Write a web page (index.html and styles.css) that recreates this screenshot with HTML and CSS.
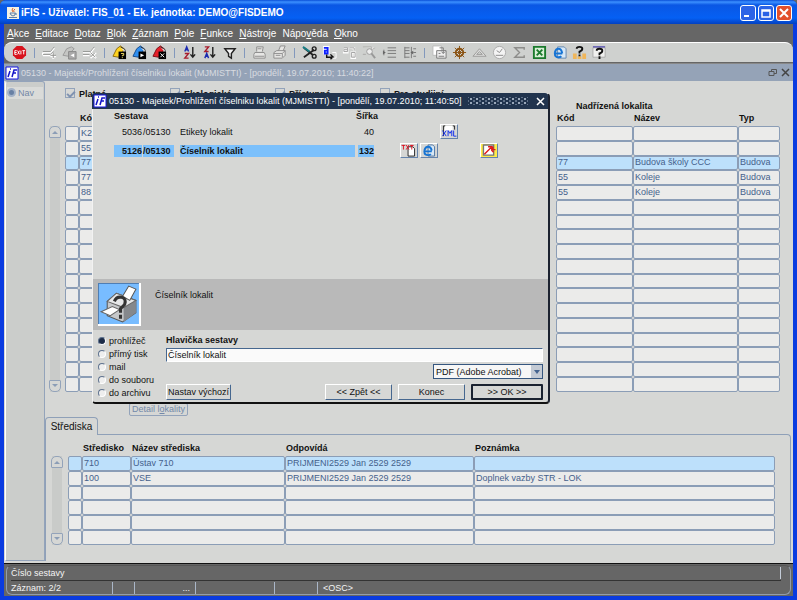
FILE: index.html
```html
<!DOCTYPE html>
<html lang="cs">
<head>
    <meta charset="UTF-8">
    <meta name="viewport" content="width=device-width, initial-scale=1.0">
    <title>iFIS</title>
    <link rel="stylesheet" href="styles.css">
</head>
<body>

<div class="window">
    <header class="titlebar">
        <svg class="java" width="12" height="12" viewBox="0 0 12 12"><rect width="12" height="12" fill="#f4f1e4"/><path d="M6 1q-2 2 0 4M8 2q-2 1-1 3" stroke="#d8642c" fill="none"/><path d="M3 6h5v2q-2 2-4 0zM8 6q2 0 1 2M2 10.500h8" stroke="#5b7fa8" fill="none"/></svg>
        <h1>iFIS - Uživatel: FIS_01 - Ek. jednotka: DEMO@FISDEMO</h1>
        <div class="window-buttons">
            <button aria-label="Minimalizovat"><svg width="14" height="14"><path d="M3 10h5" stroke="#fff" stroke-width="2"/></svg></button>
            <button aria-label="Maximalizovat"><svg width="14" height="14"><path d="M3 4h8v7H3zM3 5h8" stroke="#fff" fill="none" stroke-width="1.500"/></svg></button>
            <button class="close" aria-label="Zavřít"><svg width="14" height="14"><path d="M3 3l8 8M11 3l-8 8" stroke="#fff" stroke-width="2"/></svg></button>
        </div>
    </header>

    <nav class="menu">
        <a href="#"><u>A</u>kce</a>
        <a href="#"><u>E</u>ditace</a>
        <a href="#"><u>D</u>otaz</a>
        <a href="#"><u>B</u>lok</a>
        <a href="#"><u>Z</u>áznam</a>
        <a href="#"><u>P</u>ole</a>
        <a href="#"><u>F</u>unkce</a>
        <a href="#"><u>N</u>ástroje</a>
        <a href="#">Nápo<u>v</u>ěda</a>
        <a href="#"><u>O</u>kno</a>
    </nav>

    <div class="toolbar">
        <button aria-label="Konec"><svg viewBox="0 0 16 16"><path d="M5 1h6l4 4v6l-4 4H5l-4-4V5z" fill="#d8121c"/><path d="M5 6H3v4h2M3 8h2M6 6l2 4M8 6l-2 4M9.500 6v4M11 6h3M12.500 6v4" stroke="#fff" fill="none"/></svg></button>
        <i></i>
        <button aria-label="Nový záznam"><svg viewBox="0 0 16 16"><path d="M1 8h8l4-5M1 11h8l3-3M1 8v3M12 9v6M9 12h6" stroke="#fff" fill="none" stroke-width="2"/><path d="M1 7h8l4-5M1 10h8l3-3M12 8v6M9 11h6" stroke="#8f908e" fill="none"/></svg></button>
        <button aria-label="Kopie záznamu"><svg viewBox="0 0 16 16"><path d="M1 11l4-7 5-2 3 2-4 4-2 4z" fill="#c4c5c3" stroke="#999"/><path d="M7 7h8v8H7z" fill="#aaa" stroke="#888"/><path d="M13 9v4l-4-2z" fill="#fff"/></svg></button>
        <button aria-label="Smazat záznam"><svg viewBox="0 0 16 16"><path d="M1 8h8l4-5M1 11h7M9 8l6 6M15 8l-6 6" stroke="#fff" fill="none" stroke-width="2"/><path d="M1 7h8l4-5M1 10h7M9 8l5 5M14 8l-5 5" stroke="#8f908e" fill="none"/></svg></button>
        <i></i>
        <button aria-label="Zadat dotaz"><svg viewBox="0 0 16 16"><path d="M1 12l4-8 4-3 4 3-2 4-4 5z" fill="#ffd21e" stroke="#8a6a10"/><path d="M9 2l5 3v3" stroke="#333" fill="#fff"/><path d="M7 7h8v8H7z"/><path d="M9.500 9h3v2h-1.500v1M11 13v1" stroke="#ffe86a" fill="none"/></svg></button>
        <button aria-label="Provést dotaz"><svg viewBox="0 0 16 16"><path d="M1 12l4-8 4-3 4 3-2 4-4 5z" fill="#2f8ff0" stroke="#174b8b"/><path d="M9 2l5 3v3" stroke="#333" fill="#fff"/><path d="M7 7h8v8H7z"/><path d="M9 9v4l4-2z" fill="#fff"/></svg></button>
        <button aria-label="Zrušit dotaz"><svg viewBox="0 0 16 16"><path d="M1 12l4-8 4-3 4 3-2 4-4 5z" fill="#e6202a" stroke="#7b1016"/><path d="M9 2l5 3v3" stroke="#333" fill="#fff"/><path d="M7 7h8v8H7z"/><path d="M9 9l4 4M13 9l-4 4" stroke="#fff"/></svg></button>
        <i></i>
        <button aria-label="Třídit vzestupně"><svg viewBox="0 0 16 16"><path d="M3 7l2-5 2 5M4 5h2" stroke="#1c2bb0" fill="none" stroke-width="1.500"/><path d="M3 9h4l-4 5h4" stroke="#a81c2c" fill="none" stroke-width="1.500"/><path d="M11.500 2v11M9 10l2.500 3L14 10" stroke="#222" fill="none" stroke-width="1.500"/></svg></button>
        <button aria-label="Třídit sestupně"><svg viewBox="0 0 16 16"><path d="M3 2h4L3 7h4" stroke="#a81c2c" fill="none" stroke-width="1.500"/><path d="M3 14l2-5 2 5M4 12h2" stroke="#1c2bb0" fill="none" stroke-width="1.500"/><path d="M11.500 2v11M9 10l2.500 3L14 10" stroke="#222" fill="none" stroke-width="1.500"/></svg></button>
        <button aria-label="Filtr"><svg viewBox="0 0 16 16"><path d="M3 4h11L10 9v5l-3-2V9z" fill="#f4f4f4" stroke="#222" stroke-width="1.500"/></svg></button>
        <i></i>
        <button aria-label="Tisk"><svg viewBox="0 0 16 16"><path d="M5 7V2h7l-1 5M3 8h10l1 2v4H2v-4z" fill="#e6e6e4" stroke="#8c8c8c"/><path d="M3 12h10M6 4h4" stroke="#8c8c8c"/></svg></button>
        <button aria-label="Tisk sestavy"><svg viewBox="0 0 16 16"><path d="M7 6l2-5h5l-2 5M2 8l3-2h9v5l-3 3H2z" fill="#e6e6e4" stroke="#8c8c8c"/><path d="M2 9h9v4M11 9l3-3M4 11h5" stroke="#8c8c8c" fill="none"/></svg></button>
        <i></i>
        <button aria-label="Vyjmout"><svg viewBox="0 0 16 16"><path d="M2 3l10 8M2 13L13 5" stroke="#222" stroke-width="2"/><path d="M1 2l7 5" stroke="#1a7f86" stroke-width="2"/><circle cx="13" cy="4" r="2" fill="none" stroke="#222" stroke-width="1.500"/><circle cx="13" cy="12" r="2" fill="none" stroke="#222" stroke-width="1.500"/></svg></button>
        <button aria-label="Kopírovat"><svg viewBox="0 0 16 16"><path d="M1 1h7v9H1z" fill="#fff"/><path d="M2 3h4v6H3V6h3" stroke="#0b1fff" fill="none" stroke-width="2"/><path d="M5 10v3h7M9 10l3 3-3 2" stroke="#111" fill="none" stroke-width="1.500"/><path d="M11 8h4v6h-4" stroke="#fff" fill="none"/></svg></button>
        <button aria-label="Vložit"><svg viewBox="0 0 16 16"><path d="M2 4h4v4H2V6h4M8 3h5v3M10 8h4v6h-4z" stroke="#fff" fill="#e4e4e2" stroke-width="2"/><path d="M2 3h4v4H2V5h4M8 3h5v3M10 8h4v5h-4z" stroke="#a0a0a0" fill="none"/></svg></button>
        <button aria-label="Editor"><svg viewBox="0 0 16 16"><path d="M1 2h9v3l4-2M4 10H1z" fill="#fff" stroke="#b0b0ae"/><circle cx="8" cy="7" r="3" fill="#eee" stroke="#999"/><path d="M10 9l4 5" stroke="#999" stroke-width="2"/></svg></button>
        <button aria-label="Seznam"><svg viewBox="0 0 16 16"><path d="M6 3h9M6 6h9M6 9h9M6 13h9M2 5v6" stroke="#777" fill="none"/><path d="M1 6l3 2-3 2z" fill="#666"/></svg></button>
        <button aria-label="Strom"><svg viewBox="0 0 16 16"><path d="M3 2v12M3 3h5M3 6h5M3 9h5M3 13h5M10 2v12M12 4h3M12 8h3M12 12h3" stroke="#777" fill="none"/><path d="M12 6v4l-3-2z" fill="#666"/></svg></button>
        <i></i>
        <button aria-label="Přenos"><svg viewBox="0 0 16 16"><path d="M1 1h9v10H1z" fill="#fff" stroke="#bbb"/><path d="M5 6h10v8H5z" fill="#eee" stroke="#777"/><path d="M8 3h4v6M10 7l2 2 2-2M7 9h2M7 12h6" stroke="#777" fill="none"/></svg></button>
        <button aria-label="Nastavení"><svg viewBox="0 0 16 16"><circle cx="8" cy="8" r="4" fill="none" stroke="#8a5212" stroke-width="2"/><path d="M8 1v14M1 8h14M3 3l10 10M13 3L3 13" stroke="#8a5212"/></svg></button>
        <button aria-label="Měřítko"><svg viewBox="0 0 16 16"><path d="M1 12L8 4l7 8zM5 10l3-3 3 3z" fill="#ddd" stroke="#9a9a98" fill-rule="evenodd"/></svg></button>
        <button aria-label="Hodiny"><svg viewBox="0 0 16 16"><circle cx="8" cy="8" r="6.500" fill="#f4f4f4" stroke="#aaa"/><path d="M5 6l3 2 3-4M4 11h8" stroke="#888" fill="none"/></svg></button>
        <button aria-label="Součet"><svg viewBox="0 0 16 16"><path d="M13 5V3H3l5 5-5 5h10v-2" fill="none" stroke="#8d8d8b" stroke-width="1.500"/></svg></button>
        <button aria-label="Excel"><svg viewBox="0 0 16 16"><path d="M2 2h12v12H2z" fill="#d9efd6" stroke="#1a7a2c" stroke-width="2"/><path d="M5 5l6 6M11 5l-6 6" stroke="#1a7a2c" stroke-width="2"/></svg></button>
        <button aria-label="Prohlížeč"><svg viewBox="0 0 16 16"><path d="M6 2h7l2 2v10H6z" fill="#d8e8f6" stroke="#6288b0"/><path d="M11 9H3q0 4 4 4 2 0 3-1M3 8q1-4 4-4t4 5" fill="none" stroke="#1774d4" stroke-width="2"/></svg></button>
        <button aria-label="Nápověda organizace"><svg viewBox="0 0 16 16"><path d="M1 9h4v6H1zM6 12h4v3H6zM11 9h4v6h-4z" fill="#f0b65a"/><path d="M5 4q0-2 3-2t3 2q0 2-3 3v2M8 10v2" fill="none" stroke="#111" stroke-width="2"/></svg></button>
        <button aria-label="Nápověda"><svg viewBox="0 0 16 16"><path d="M1 3h13v10H1z" fill="#f0f0ee" stroke="#aaa"/><path d="M1 2h13" stroke="#2a1fa8"/><path d="M5 6q0-2 3-2t3 2q0 2-3 3v2M8 12v3" fill="none" stroke="#111" stroke-width="2"/></svg></button>
    </div>

    <div class="form-title">
        <svg class="logo" viewBox="0 0 14 14"><path d="M1 1h12v12H1z" fill="#fff" stroke="#1414e0"/><path d="M5 5l-2 6M5 3h1M7 11l2-7h3M8 7h3" stroke="#1414c8" fill="none" stroke-width="1.500"/></svg>
        <h2>05130 - Majetek/Prohlížení číselniku lokalit (MJMISTTI) - [pondělí, 19.07.2010; 11:40:22]</h2>
        <div class="form-buttons">
            <button aria-label="Obnovit"><svg width="9" height="9"><path d="M3.500 3V1.500h5v4H6M1 3.500h5v4H1z" stroke="#555" fill="none"/></svg></button>
            <button aria-label="Zavřít formulář"><svg width="9" height="9"><path d="M1 1l7 7M8 1L1 8" stroke="#444" stroke-width="1.500"/></svg></button>
        </div>
    </div>

    <main class="form">
        <aside class="side">
            <label><input type="radio" name="nav" checked>Nav</label>
        </aside>

        <div class="content">
            <div class="checks">
                <label><input type="checkbox" checked>Platné</label>
                <label><input type="checkbox" checked>Ekologické</label>
                <label><input type="checkbox" checked>Přístupné</label>
                <label><input type="checkbox">Pro studijní</label>
            </div>

            <div class="locations">
                <div class="scroll">
                    <button aria-label="Nahoru"><svg width="8" height="4"><path d="M1 4l3-3 3 3z"/></svg></button>
                    <button aria-label="Dolů"><svg width="8" height="4"><path d="M1 0h6L4 3z"/></svg></button>
                </div>
                <div class="block own">
                    <table class="grid" id="own" data-rows="18">
                        <colgroup><col class="mark"><col></colgroup>
                        <thead><tr><th></th><th>Kód</th></tr></thead>
                        <tbody></tbody>
                    </table>
                </div>
                <div class="block parent">
                    <h3>Nadřízená lokalita</h3>
                    <table class="grid" id="parent" data-rows="18">
                        <colgroup><col class="code"><col class="name"><col></colgroup>
                        <thead><tr><th>Kód</th><th>Název</th><th>Typ</th></tr></thead>
                        <tbody></tbody>
                    </table>
                </div>
            </div>

            <button class="detail">Detail l<u>o</u>kality</button>

            <button class="tab">Střediska</button>
            <section class="panel">
                <div class="scroll">
                    <button aria-label="Nahoru"><svg width="8" height="4"><path d="M1 4l3-3 3 3z"/></svg></button>
                    <button aria-label="Dolů"><svg width="8" height="4"><path d="M1 0h6L4 3z"/></svg></button>
                </div>
                <table class="grid" id="centres" data-rows="6">
                    <colgroup><col class="mark"><col class="centre"><col class="title"><col class="person"><col></colgroup>
                    <thead><tr><th></th><th>Středisko</th><th>Název střediska</th><th>Odpovídá</th><th>Poznámka</th></tr></thead>
                    <tbody></tbody>
                </table>
            </section>
        </div>
    </main>

    <footer class="status">
        <div class="hint"><span>Číslo sestavy</span></div>
        <div class="record">
            <span>Záznam: 2/2</span><span></span><span class="dots">...</span><span></span><span></span><span>&lt;OSC&gt;</span>
        </div>
    </footer>
</div>

<div class="dialog" role="dialog" aria-label="Sestavy">
    <div class="dialog-title">
        <svg class="logo" viewBox="0 0 14 14"><path d="M1 1h12v12H1z" fill="#fff" stroke="#1414e0"/><path d="M5 5l-2 6M5 3h1M7 11l2-7h3M8 7h3" stroke="#1414c8" fill="none" stroke-width="1.500"/></svg>
        <h2>05130 - Majetek/Prohlížení číselniku lokalit (MJMISTTI) - [pondělí, 19.07.2010; 11:40:50]</h2>
        <span class="grip"></span>
        <button aria-label="Zavřít dialog"><svg width="9" height="9"><path d="M1 1l7 7M8 1L1 8" stroke="#fff" stroke-width="1.500"/></svg></button>
    </div>

    <table class="reports">
        <colgroup><col class="number"><col class="module"><col class="report"><col class="width"><col></colgroup>
        <thead><tr><th colspan="3">Sestava</th><th>Šířka</th><th></th></tr></thead>
        <tbody>
            <tr>
                <td class="right"><span>5036</span></td><td><span>/05130</span></td><td><span>Etikety lokalit</span></td><td class="right"><span>40</span></td>
                <td><div class="outputs">
                    <button class="xml" aria-label="XML"><svg viewBox="0 0 16 14"><path d="M2 12V1h2M12 1h2v4" fill="none" stroke="#222"/><path d="M4 1h8v5H3z" fill="#fff"/><path d="M1 6l4 6M5 6l-4 6M7 12V6l2 3 2-3v6M13 6v6h3" stroke="#0b28f0" fill="none"/></svg></button>
                </div></td>
            </tr>
            <tr class="current">
                <td class="right"><span>5126</span></td><td><span>/05130</span></td><td><span>Číselník lokalit</span></td><td class="right"><span>132</span></td>
                <td><div class="outputs">
                    <button class="txt" aria-label="TXT"><svg viewBox="0 0 16 14"><path d="M7 3h5l2 2v8H7z" fill="#fff" stroke="#222"/><path d="M0 1.500h4M2 1v5M5 1l3 5M8 1L5 6M9 1.500h4M11 1v5" stroke="#e01020" fill="none"/></svg></button>
                    <button class="html" aria-label="HTML"><svg viewBox="0 0 16 14"><path d="M7 1h5l2 2v10H7z" fill="#d8e8f6" stroke="#4a70a0"/><path d="M11 8H3q0 4 4 4 2 0 3-1M3 7q1-4 4-4t4 4" fill="none" stroke="#1774d4" stroke-width="2"/></svg></button>
                    <button class="pdf" aria-label="PDF"><svg viewBox="0 0 16 14"><path d="M2 1h11v11H2z" fill="#fff" stroke="#777" stroke-width="1.500"/><path d="M3 11l7-7M7 3h4q2 0 1 3h3M11 3v4l2 2" fill="none" stroke="#e01818" stroke-width="1.500"/></svg></button>
                </div></td>
            </tr>
        </tbody>
    </table>

    <div class="summary">
        <svg viewBox="0 0 42 42">
            <path d="M0 0h42v42H0z" fill="#78bcff"/>
            <path d="M0 42V0h42" fill="none" stroke="#4f7eb4" stroke-width="2"/>
            <path d="M41 0v41H0" fill="none" stroke="#fff" stroke-width="2"/>
            <path d="M9 18l9-8 19 7v12l-13 9-15-6z" fill="#c6c8ca" stroke="#555"/>
            <path d="M25 24l12-7v12l-12 9z" fill="#85888c"/>
            <path d="M9 18l9-8 19 7-12 7z" fill="#e6e7e8" stroke="#666"/>
            <path d="M24 13l6-10 7 3-6 11z" fill="#fff" stroke="#555"/>
            <path d="M3 28l11-5 7 3-9 6z" fill="#fff" stroke="#666"/>
            <path d="M16 18q2-5 7-4t3 7l-4 4v4M22 31v4" fill="none" stroke="#333" stroke-width="3"/>
        </svg>
        <p>Číselník lokalit</p>
    </div>

    <form class="options">
        <fieldset class="targets">
            <label><input type="radio" name="target" checked>prohlížeč</label>
            <label><input type="radio" name="target">přímý tisk</label>
            <label><input type="radio" name="target">mail</label>
            <label><input type="radio" name="target">do souboru</label>
            <label><input type="radio" name="target">do archivu</label>
        </fieldset>
        <div class="fields">
            <label for="heading">Hlavička sestavy</label>
            <input type="text" id="heading" value="Číselník lokalit">
            <div class="select">
                <select id="format" aria-label="Formát">
                    <option>PDF (Adobe Acrobat)</option>
                </select>
            </div>
            <div class="actions">
                <button type="button" class="default">Nastav výchozí</button>
                <button type="button">&lt;&lt; Zpět &lt;&lt;</button>
                <button type="button">Konec</button>
                <button type="button" class="ok">&gt;&gt; OK &gt;&gt;</button>
            </div>
        </div>
    </form>
</div>

<script>
    const data = {
        own: [['', 'K2'], ['', '55'], ['', '77'], ['', '77'], ['', '88']],
        parent: [[], [], ['77', 'Budova školy CCC', 'Budova'], ['55', 'Koleje', 'Budova'], ['55', 'Koleje', 'Budova']],
        centres: [
            ['', '710', 'Ústav 710', 'PRIJMENI2529 Jan 2529 2529', ''],
            ['', '100', 'VSE', 'PRIJMENI2529 Jan 2529 2529', 'Doplnek vazby STR - LOK']
        ]
    };
    const selected = { own: 2, parent: 2, centres: 0 };

    // Fill every grid up to its number of visible rows
    document.querySelectorAll('.grid').forEach(function (table) {
        const body = table.querySelector('tbody');
        const columns = table.querySelectorAll('col').length;
        for (let i = 0; i < Number(table.dataset.rows); i++) {
            const row = body.insertRow();
            const values = data[table.id][i] || [];
            if (i === selected[table.id]) {
                row.className = 'selected';
            }
            for (let j = 0; j < columns; j++) {
                row.insertCell().textContent = values[j] || '';
            }
        }
    });
</script>

</body>
</html>
```
FILE: styles.css
```css
* {
    box-sizing: border-box;
}

body {
    margin: 0;
    font-family: 'Liberation Sans', Arial, sans-serif;
    font-size: 9px;
    line-height: 12px;
    color: #111;
    background-color: #666;
}

button, input, select {
    font: inherit;
    color: inherit;
    margin: 0;
    padding: 0;
}

button {
    border: none;
    background: none;
}

svg {
    display: block;
}

h1, h2, h3, p {
    margin: 0;
}

table {
    border-collapse: separate;
    border-spacing: 0;
    table-layout: fixed;
}

th {
    padding: 0;
    text-align: left;
    white-space: nowrap;
}

/* Main window */
.window {
    min-height: 100vh;
    display: flex;
    flex-direction: column;
    border: 4px solid #0a3be0;
    border-top: none;
    border-radius: 6px 6px 0 0;
    background-color: #666;
}

.titlebar {
    display: flex;
    align-items: center;
    height: 24px;
    margin: 0 -4px;
    padding: 2px 5px 0 7px;
    border-radius: 6px 6px 0 0;
    background: linear-gradient(#0a4fd8, #3c90ff 2px, #0a57e4 5px, #0560f4 18px, #0340c0);
    color: #fff;
}

.titlebar h1 {
    flex: 1;
    margin-left: 2px;
    font-size: 10px;
    font-weight: bold;
}

.window-buttons {
    display: flex;
    gap: 2px;
}

.window-buttons button {
    width: 16px;
    height: 16px;
    border: 1px solid #fff;
    border-radius: 3px;
    background-color: #2c63e6;
}

.window-buttons .close {
    background-color: #e2502c;
}

.menu {
    display: flex;
    gap: 6px;
    height: 18px;
    padding: 4px 3px 0;
    font-size: 10px;
}

.menu a {
    color: #fff;
    text-decoration: none;
}

.toolbar {
    display: flex;
    align-items: center;
    height: 20px;
    padding-left: 5px;
    border-top: 1px solid #fff;
    border-radius: 8px 8px 0 8px;
    background-color: #cfd1cf;
}

.toolbar button {
    width: 20px;
    padding: 0 3px;
}

.toolbar svg {
    width: 15px;
    height: 15px;
}

.toolbar i {
    width: 1px;
    height: 10px;
    margin: 0 4px 0 5px;
    background-color: #8298bc;
}

.form-title {
    display: flex;
    align-items: center;
    height: 18px;
    margin-top: 1px;
    padding: 0 3px 0 1px;
    border-top: 1px solid #888;
    background-color: #95a3b7;
    color: #d8dbe0;
}

.logo {
    width: 14px;
    height: 14px;
}

.form-title h2, .dialog-title h2 {
    margin-left: 2px;
    font-size: 9px;
    font-weight: normal;
    white-space: nowrap;
}

.form-buttons {
    display: flex;
    gap: 4px;
    margin-left: auto;
}

.form {
    flex: 1;
    display: flex;
    border-bottom: 1px solid #111;
    background-color: #d6d7d5;
}

.side {
    width: 40px;
    margin: 0 0 2px 1px;
    padding: 5px 1px;
    border: 1px solid #93a3ba;
    border-left-color: #fff;
    border-radius: 3px 3px 0 0;
    background-color: #cbcdcb;
    color: #7287a6;
}

.side label {
    display: flex;
    gap: 2px;
    background-color: #dadbd9;
}

.side input {
    appearance: none;
    width: 9px;
    height: 9px;
    margin-top: 1px;
    border: 2px solid #a3b2c8;
    border-radius: 50%;
    background-color: #6880a4;
}

.content {
    flex: 1;
    min-width: 0;
    padding-top: 7px;
}

.checks {
    display: flex;
    margin-left: 20px;
    font-weight: bold;
}

.checks label {
    display: flex;
    gap: 4px;
    width: 105px;
}

.checks input {
    appearance: none;
    width: 10px;
    height: 10px;
    border: 1px solid #93a3ba;
}

.checks input:checked::before {
    content: '';
    display: block;
    width: 6px;
    height: 3px;
    margin: 2px 1px;
    border: solid #7f92b0;
    border-width: 0 0 2px 2px;
    transform: rotate(-45deg);
}

.locations {
    display: flex;
    align-items: flex-end;
    padding: 0 13px 0 4px;
}

.block.own {
    flex: 1;
    margin: 0 15px 0 4px;
}

.block.parent {
    width: 224px;
}

.block h3 {
    margin-left: 20px;
    font-size: 9px;
}

.grid {
    width: 100%;
    height: 280px;
}

.grid th {
    height: 14px;
    padding: 0 0 2px 1px;
    line-height: 12px;
}

.grid td {
    height: 14px;
    padding: 0 1px;
    border: 1px solid #8b9db6;
    border-radius: 2px;
    line-height: 11px;
    white-space: nowrap;
    color: #45618c;
    background-color: #ebebea;
}

.grid .selected td {
    background-color: #bde0fb;
}

.mark {
    width: 14px;
}

.code {
    width: 77px;
}

.name {
    width: 105px;
}

.centre {
    width: 49px;
}

.title {
    width: 154px;
}

.person {
    width: 189px;
}

.scroll {
    display: flex;
    flex-direction: column;
    justify-content: space-between;
    align-self: flex-end;
    width: 12px;
    height: 266px;
    border: solid #d6d7d5;
    border-width: 0 1px;
    background-color: #c9cbc9;
}

.scroll button {
    display: flex;
    align-items: center;
    justify-content: center;
    width: 12px;
    height: 12px;
    margin: 0 -1px;
    border: 1px solid #93a3ba;
    border-radius: 5px 5px 1px 1px;
    background-color: #d6d7d5;
}

.scroll button:last-child {
    border-radius: 1px 1px 5px 5px;
}

.scroll path {
    fill: #8b9db6;
}

.detail {
    display: block;
    margin: 11px 0 0 84px;
    padding: 0 2px;
    border: 1px solid #93a3ba;
    border-radius: 2px;
    line-height: 11px;
    color: #7389a9;
}

.tab {
    position: relative;
    display: block;
    width: 53px;
    height: 18px;
    margin-top: 1px;
    border: 1px solid #8fa0b8;
    border-bottom: none;
    border-radius: 4px 4px 0 0;
    background-color: #d6d7d5;
    font-size: 10px;
}

.panel {
    display: flex;
    margin: -1px 2px 0 0;
    padding: 7px 15px 16px 5px;
    border: 1px solid #8fa0b8;
    border-bottom: none;
    border-radius: 0 4px 0 0;
}

.panel .scroll {
    height: 89px;
    margin-right: 5px;
}

.panel .grid {
    flex: 1;
    height: 103px;
}

.status {
    margin: 1px 2px 1px;
    padding: 0 4px;
    border: 1px solid #939dab;
    border-top-color: #555;
    border-radius: 6px;
    color: #f4f4f4;
}

.hint {
    height: 15px;
    margin: 0 5px 0 0;
    padding-top: 1px;
    border-bottom: 1px solid #333;
}

.hint span {
    display: block;
    padding-right: 4px;
    border-right: 1px solid #c4ccd8;
}

.record {
    display: flex;
}

.record span {
    width: 61px;
    height: 12px;
    margin-top: 1px;
    padding-left: 5px;
    border-left: 1px solid #aab6c8;
}

.record span:first-child {
    width: 101px;
    padding: 0;
    border: none;
}

.record span:nth-child(2) {
    width: 22px;
}

.record span:nth-child(4) {
    width: 79px;
}

.record span:nth-child(5) {
    width: 43px;
}

.record .dots {
    padding-right: 5px;
    text-align: right;
}

/* Report dialog over the form */
.dialog {
    position: absolute;
    left: 92px;
    top: 93px;
    width: 458px;
    border: 1px solid #f2f2f2;
    border-right: 2px solid #1c2230;
    border-bottom: 2px solid #111;
    border-radius: 2px 4px 4px 4px;
    background-color: #d6d7d5;
}

.dialog-title {
    display: flex;
    align-items: center;
    height: 16px;
    margin: -1px 0 0 -1px;
    padding: 0 1px;
    border-radius: 2px 3px 0 0;
    background-color: #21344e;
    color: #fff;
}

.dialog-title button {
    padding: 2px;
}

.grip {
    flex: 1;
    height: 8px;
    margin: 0 6px;
    background:
        radial-gradient(#9aa8ba 1px, transparent 1px) 0 0 / 6px 4px,
        radial-gradient(#5f7088 1px, transparent 1px) 3px 2px / 6px 4px;
}

.reports {
    width: 100%;
    padding-left: 21px;
}

.number {
    width: 29px;
}

.module {
    width: 37px;
}

.report {
    width: 176px;
}

.width {
    width: 19px;
}

.reports th {
    height: 13px;
}

.reports td {
    height: 19px;
    padding: 0;
    white-space: nowrap;
}

.reports td span {
    display: block;
    height: 12px;
    margin-right: 1px;
}

.reports td:nth-child(2) span {
    margin-right: 6px;
}

.reports td:nth-child(4) span {
    margin-left: 2px;
}

.right {
    text-align: right;
}

.reports .current span {
    background-color: #7cc0fb;
    font-weight: bold;
}

.outputs {
    display: grid;
    grid-template-columns: repeat(5, 18px);
    column-gap: 2px;
    margin-left: 25px;
}

.outputs button {
    height: 15px;
    border: 1px solid #fff;
    border-right-color: #6583ab;
    border-bottom-color: #6583ab;
}

.outputs svg {
    width: 16px;
    height: 13px;
}

.outputs .xml {
    grid-column: 3;
}

.outputs .pdf {
    grid-column: 5;
    background-color: #ffec4a;
}

.summary {
    display: flex;
    gap: 14px;
    height: 51px;
    margin-top: 119px;
    padding: 4px 5px;
    background-color: #b9b9b9;
}

.summary > svg {
    width: 43px;
    height: 43px;
}

.summary p {
    margin-top: 6px;
}

.options {
    display: flex;
    padding: 4px 5px 2px;
}

.targets {
    width: 68px;
    margin: 0;
    padding: 0;
    border: none;
}

.targets label {
    display: flex;
    align-items: center;
    gap: 3px;
    height: 13px;
    white-space: nowrap;
}

.targets input {
    appearance: none;
    width: 8px;
    height: 8px;
    border: 1px solid #5f738f;
    border-right-color: #fff;
    border-bottom-color: #fff;
    border-radius: 50%;
    background-color: #eee;
}

.targets input:checked {
    background-color: #1c2c48;
}

.fields {
    flex: 1;
}

.fields > label {
    display: block;
    height: 14px;
    font-weight: bold;
}

.fields > input {
    display: block;
    width: 100%;
    height: 14px;
    padding: 0 1px;
    border: 1px solid #46678f;
    border-right-color: #fff;
    border-bottom-color: #fff;
    background-color: #fafafa;
}

.select {
    position: relative;
    width: 110px;
    height: 15px;
    margin: 2px 0 5px auto;
}

.select select {
    appearance: none;
    width: 100%;
    height: 15px;
    padding: 0 2px;
    border: 1px solid #35567f;
    border-radius: 0;
    background: linear-gradient(#c3cad4, #c3cad4) right / 11px 100% no-repeat #f6f6f6;
}

/* Arrow of the drop-down */
.select::after {
    content: '';
    position: absolute;
    right: 3px;
    top: 6px;
    border: 3px solid transparent;
    border-top: 4px solid #45648f;
    border-bottom: none;
}

.actions {
    display: flex;
    gap: 6px;
}

.actions button {
    width: 67px;
    height: 16px;
    border: 1px solid #fff;
    border-right-color: #46678f;
    border-bottom-color: #46678f;
    border-radius: 1px;
    background-color: #d6d7d5;
    white-space: nowrap;
}

.actions .default {
    width: 65px;
    margin-right: auto;
}

.actions .ok {
    width: 72px;
    border: 2px solid #1a2230;
}
```
